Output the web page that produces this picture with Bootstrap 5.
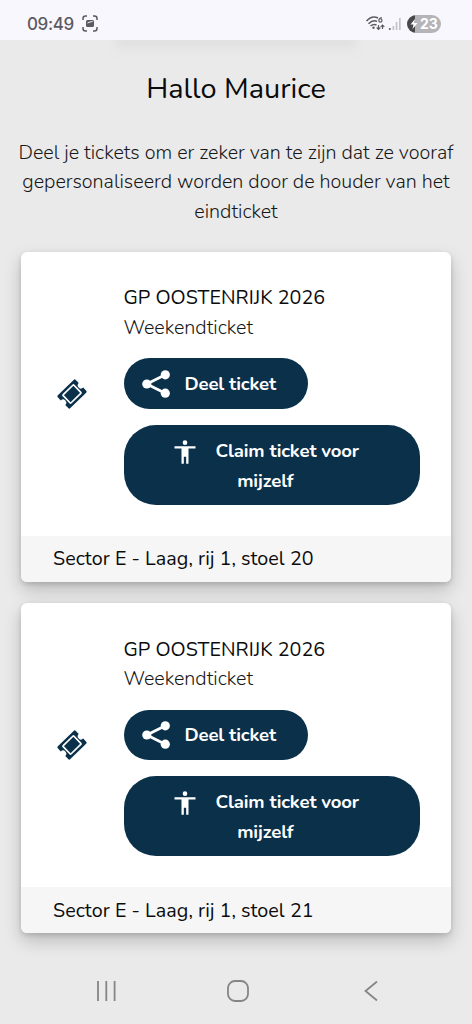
<!DOCTYPE html>
<html lang="nl">
<head>
<meta charset="utf-8">
<meta name="viewport" content="width=device-width, initial-scale=1">
<title>Tickets</title>
<link href="https://cdn.jsdelivr.net/npm/bootstrap@5.3.0/dist/css/bootstrap.min.css" rel="stylesheet">
<style>
  body { font-family: Nunito, Lato, "Open Sans", sans-serif; background: #eaeaea; color: #0b0b0b; font-size: 19.7px; line-height: 29.6px; height: 1024px; overflow: hidden; }
  .status-bar { height: 40px; background: #f9f7fe; padding: 8px 31px 0 27px; color: #5b5a60; font-family: Inter, sans-serif; position: relative; z-index: 1; }
  .clock { font-size: 17px; line-height: 33px; font-weight: 500; letter-spacing: -.4px; }
  .header-shade { height: 14px; margin: -2px 116px 0; background: linear-gradient(#dadadb, #eaeaea); filter: blur(4px); }
  .status-icon { margin-top: 7px; }
  .battery { width: 34px; height: 18px; border-radius: 9px; background: linear-gradient(90deg, #49484d 8px, #b5b4b9 8px); color: #fff; font-size: 14px; font-weight: 700; line-height: 18px; padding-left: 13px; }
  .hello { font-size: 28.9px; line-height: 36px; margin: 18px 0 30px; padding-top: .5px; font-weight: 400; }
  .light { font-weight: 300; color: #181818; }
  .intro { margin-bottom: 25.5px; padding-top: 1px; }
  .line { display: block; white-space: nowrap; }
  .ticket { border: 0; border-radius: 6px; width: 430px; margin: 0 0 21.3px 21px; box-shadow: 0 8px 18px rgba(0,0,0,.2), 0 2px 5px rgba(0,0,0,.14); }
  .ticket-main { height: 284px; padding: 31.7px 31px 0 0; }
  .ticket-icon { width: 102.5px; padding-top: 94.5px; }
  .event { letter-spacing: .04px; }
  .pill { background: #0a304a; color: #fff; font-weight: 700; border: 0; font-size: 18.6px; letter-spacing: -.15px; line-height: 30px; --bs-btn-hover-bg: #0a304a; }
  .pill-share { width: 184.5px; height: 50.5px; border-radius: 26px; padding: 1px 0 0 18px; margin: 15.6px 0 16px; }
  .pill-share span { margin-left: 15px; }
  .pill-claim { width: 296.5px; height: 80px; border-radius: 32px; padding: 11px 13px 9px 0; }
  .pill-claim svg { margin: 2px 16px 0 0; }
  .seat { background: #f6f6f6; height: 46px; line-height: 46px; padding: .6px 0 0 32px; border: 0; border-radius: 0 0 6px 6px !important; }
  .seat span { letter-spacing: .05px; }
  .nav-keys { height: 74px; padding: 0 94.5px 0 97px; }
  .home-key { margin-right: 5px; }
</style>
</head>
<body>
<svg class="d-none">
  <symbol id="ticket" viewBox="0 0 32 32"><g transform="rotate(-44 16 16)">
    <path fill="#0a304a" d="M5 7h22q1.500 0 1.500 1.500v4.300a3.200 3.200 0 0 0 0 6.400v4.300q0 1.500-1.500 1.500H5q-1.500 0-1.500-1.500v-4.300a3.200 3.200 0 0 0 0-6.400V8.500q0-1.500 1.500-1.500z"/>
    <rect x="8.500" y="10.300" width="15" height="11.400" rx=".8" fill="none" stroke="#fff" stroke-width="1.700"/></g></symbol>
  <symbol id="share" viewBox="0 0 28 28"><path d="M23.300 4.700 4.800 14l18.500 9.300" fill="none" stroke="#fff" stroke-width="2.800"/><g fill="#fff"><circle cx="23.300" cy="4.800" r="4.600"/><circle cx="4.800" cy="14" r="4.600"/><circle cx="23.300" cy="23.200" r="4.600"/></g></symbol>
  <symbol id="person" viewBox="0 0 24 24"><path fill="#fff" d="M12 2a2 2 0 1 1 0 4 2 2 0 0 1 0-4zm9 7h-6v13h-2v-6h-2v6H9V9H3V7h18z"/></symbol>
</svg>

<header class="status-bar d-flex">
  <span class="clock">09:49</span>
  <svg class="ms-2 status-icon" width="16" height="17" viewBox="0 0 16 17" fill="none" stroke="#5b5a60" stroke-width="1.500"><path d="M1 5V3.500Q1 1 3.500 1H5m6 0h1.500Q15 1 15 3.500V5m0 7v1.500Q15 16 12.500 16H11m-6 0H3.500Q1 16 1 13.500V12"/><rect x="4" y="5" width="8" height="7" rx="1.500" fill="#5b5a60" stroke="none"/><path d="M5.500 8 8 7l2.500-.5" stroke="#f9f7fe" stroke-width="1"/></svg>
  <div class="ms-auto d-flex">
    <svg class="status-icon" width="42" height="18" viewBox="0 0 42 18"><g fill="none" stroke="#5b5a60" stroke-width="1.500"><path d="M1.500 6Q7-.2 13 3M3.500 8.700Q8 4.500 12 6.500M5.500 11Q8.500 8.500 11.500 10"/><path d="M16.800 2.500q-3 .5-3 3a1.600 1.600 0 1 0 1.600-1.600" stroke-width="1.200"/><path d="M13.500 10v4m-1.800-1.500 1.800 1.800 1.800-1.800M17.500 14v-3.700m-1.800 1.500 1.800-1.800 1.800 1.800" stroke-width="1.200"/></g><circle cx="8.500" cy="12.700" r="1.200" fill="#5b5a60"/><circle cx="24.800" cy="14" r="1" fill="#5b5a60"/><g fill="#c4c3c9"><rect x="27.500" y="11" width="1.700" height="4"/><rect x="30.700" y="7" width="1.700" height="8"/><rect x="34" y="3" width="1.700" height="12"/></g></svg>
    <div class="battery status-icon position-relative">23<svg class="position-absolute start-0 top-0" width="14" height="18" viewBox="0 0 14 18"><path fill="#fff" d="M8 4 3.500 9.500h3L5.500 14 10.500 8h-3z"/></svg></div>
  </div>
</header>
<div class="header-shade"></div>

<main>
  <h1 class="hello text-center">Hallo Maurice</h1>
  <p class="intro light text-center"><span class="line">Deel je tickets om er zeker van te zijn dat ze vooraf</span><span class="line">gepersonaliseerd worden door de houder van het</span><span class="line">eindticket</span></p>

  <article class="card ticket">
    <div class="ticket-main d-flex">
      <div class="ticket-icon flex-shrink-0 d-flex justify-content-center"><svg width="32" height="32"><use href="#ticket"/></svg></div>
      <div>
        <div class="event">GP OOSTENRIJK 2026</div>
        <div class="light">Weekendticket</div>
        <button class="btn pill pill-share d-flex align-items-center"><svg width="28" height="28"><use href="#share"/></svg><span>Deel ticket</span></button>
        <button class="btn pill pill-claim"><span class="d-flex justify-content-center"><svg width="28" height="28"><use href="#person"/></svg>Claim ticket voor</span><span class="d-block">mijzelf</span></button>
      </div>
    </div>
    <div class="card-footer seat"><span>Sector E - Laag, rij 1, stoel 20</span></div>
  </article>

  <article class="card ticket">
    <div class="ticket-main d-flex">
      <div class="ticket-icon flex-shrink-0 d-flex justify-content-center"><svg width="32" height="32"><use href="#ticket"/></svg></div>
      <div>
        <div class="event">GP OOSTENRIJK 2026</div>
        <div class="light">Weekendticket</div>
        <button class="btn pill pill-share d-flex align-items-center"><svg width="28" height="28"><use href="#share"/></svg><span>Deel ticket</span></button>
        <button class="btn pill pill-claim"><span class="d-flex justify-content-center"><svg width="28" height="28"><use href="#person"/></svg>Claim ticket voor</span><span class="d-block">mijzelf</span></button>
      </div>
    </div>
    <div class="card-footer seat"><span>Sector E - Laag, rij 1, stoel 21</span></div>
  </article>
</main>

<footer class="nav-keys d-flex justify-content-between align-items-center">
  <svg width="20" height="20" viewBox="0 0 20 20" stroke="#858585" stroke-width="1.800"><path d="M1 0v20M9.300 0v20M17.600 0v20"/></svg>
  <svg class="home-key" width="22" height="22" viewBox="0 0 22 22"><rect x="1" y="1" width="20" height="20" rx="7" fill="none" stroke="#858585" stroke-width="1.800"/></svg>
  <svg width="14" height="20" viewBox="0 0 14 20"><path d="M13 .5 1.500 10 13 19.500" fill="none" stroke="#858585" stroke-width="1.800"/></svg>
</footer>
<script src="https://cdn.jsdelivr.net/npm/bootstrap@5.3.0/dist/js/bootstrap.bundle.min.js"></script>
</body>
</html>
